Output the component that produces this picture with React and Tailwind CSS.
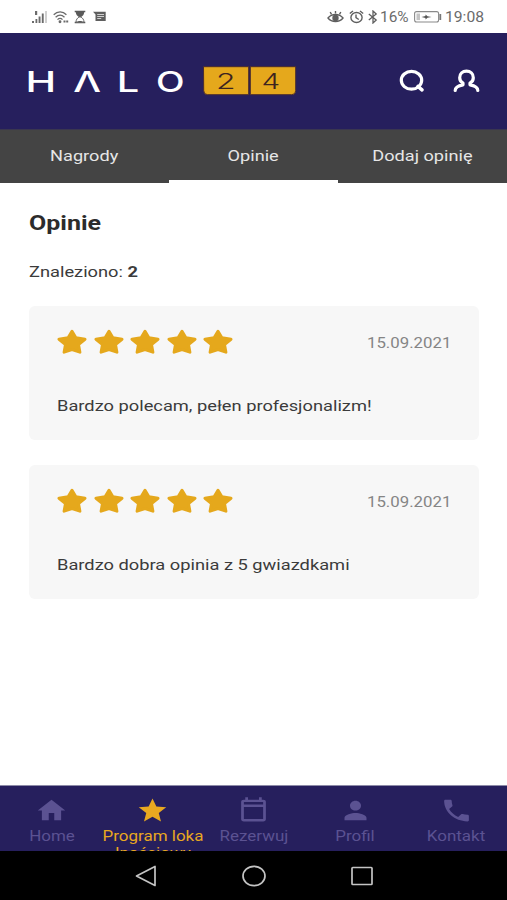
import React from "react";
import { MdHome, MdStar, MdPerson, MdPhone } from "react-icons/md";

const reviews = [
  { id: 1, date: "15.09.2021", text: "Bardzo polecam, pełen profesjonalizm!" },
  { id: 2, date: "15.09.2021", text: "Bardzo dobra opinia z 5 gwiazdkami" },
];

const tabs = ["Nagrody", "Opinie", "Dodaj opinię"];

const StatusBar = () => (
  <div className="flex h-[33px] shrink-0 items-center justify-between bg-white pl-8 pr-[23px] pt-px text-[#6b6b6b]">
    <div className="flex items-center gap-[5px]">
      {/* Zasięg */}
      <svg width="16" height="14" viewBox="0 0 16 14" fill="#6b6b6b">
        <path d="M0 11h2v2H0zM3.5 9h1.8v4H3.5zM6.6 6.5h1.9V13H6.6zM9.8 3.5h1.9V13H9.8z" />
        <path d="M3 1h2.2v4H3z" />
        <path d="M13.2 1h1.6v12h-1.6z" opacity=".4" />
      </svg>
      {/* Wi-Fi */}
      <svg width="16" height="14" viewBox="0 0 16 14" fill="none" stroke="#6b6b6b" strokeWidth="1.3">
        <path d="M.7 4.8C4.5.9 9.8.9 13.4 4.8" />
        <path d="M2.6 7.3c2.8-2.7 6.2-2.7 8.9 0M4.5 9.6c1.6-1.5 3.5-1.5 5 0" />
        <circle cx="7" cy="11.8" r=".8" fill="#6b6b6b" />
        <path d="M10.5 11.5h5" strokeWidth="2" strokeDasharray="2 .7" />
      </svg>
      {/* Klepsydra */}
      <svg width="12" height="14" viewBox="0 0 12 14">
        <path d="M.7 1.6h10.6M.7 12.6h10.6" stroke="#5a5a5a" strokeWidth="1.5" />
        <path d="M1.8 2h8.4c0 2.8-1.7 4-3.2 5H5C3.5 6 1.8 4.8 1.8 2z" fill="#5a5a5a" />
        <path d="M5 7h2c1.5 1 3 2.5 3 5.2H2C2 9.5 3.5 8 5 7z" fill="none" stroke="#6b6b6b" />
        <path d="M3.5 12c.5-1.300 4.500-1.300 5 0z" fill="#5a5a5a" />
      </svg>
      <svg width="14" height="12" viewBox="0 0 14 12" className="ml-0.5">
        <path d="M0 .8h12.700v9.200H2.500V3.500z" fill="#5f5f5f" />
        <path d="M4.200 3.500h6.800M4.200 5.500h6.800M4.200 7.500h4" stroke="#ddd" strokeWidth=".9" />
      </svg>
    </div>
    <div className="flex items-center">
      <svg width="17" height="14" viewBox="0 0 17 14" fill="none" stroke="#5f5f5f" strokeWidth="1.4">
        <path d="M1 8c3.700-4.700 11.300-4.700 15 0-3.700 4.700-11.300 4.700-15 0z" />
        <circle cx="8.500" cy="8" r="2.500" fill="#5f5f5f" />
        <path d="M8.500 1v2.500M3.200 2l1.300 2.300M13.800 2l-1.300 2.300" />
      </svg>
      <svg width="15" height="14" viewBox="0 0 15 14" fill="none" stroke="#5f5f5f" strokeWidth="1.4" className="ml-[5px]">
        <ellipse cx="7.500" cy="7.500" rx="5.600" ry="5" />
        <path d="M7 4.500v3.200l2.800 1.800M.8 3.500L4 1M14.200 3.500L11 1" />
      </svg>
      <svg width="10" height="14" viewBox="0 0 10 14" fill="none" stroke="#5f5f5f" strokeWidth="1.3" className="ml-1">
        <path d="M.8 4l7.400 6L5 13V1l3.200 3L.8 10" />
      </svg>
      <span className="ml-[2px] w-[31px] whitespace-nowrap text-sm">
        <span className="inline-block origin-left scale-x-110">16%</span>
      </span>
      <svg width="28" height="12" viewBox="0 0 28 12" className="ml-[3px]">
        <rect x=".6" y=".6" width="24" height="10.4" rx="2" fill="none" stroke="#8a8a8a" strokeWidth="1.1" />
        <path d="M2.500 2.500h3.500v6.600H2.500z" fill="#c4c4c4" />
        <path d="M7.500 6l4-1V3.500l2 1.700 4 .8-4 .8-2 1.700V7z" fill="#555" />
        <path d="M26.300 3v6" stroke="#777" strokeWidth="1.8" />
      </svg>
      <span className="ml-[3px] w-[39px] whitespace-nowrap text-sm">
        <span className="inline-block origin-left scale-x-[1.12]">19:08</span>
      </span>
    </div>
  </div>
);

const Logo = () => (
  <svg width="276" height="34" viewBox="-6 0 276 34" role="img" aria-label="HALO 24">
    <g fill="#fff" fontFamily="Inter, sans-serif" fontSize="28" fontWeight="500">
      <text transform="translate(-3.6 28) scale(1.47 1)">H</text>
      <text transform="translate(44.2 28) scale(1.4 1)">Λ</text>
      <text transform="translate(87.8 28) scale(1.42 1)">L</text>
      <text transform="translate(127 28) scale(1.33 1)">O</text>
    </g>
    <path d="M174.500 2.700h45.200v28h-41a4 4 0 0 1-4-4z" fill="#e5a81c" stroke="#4a2c2e" strokeWidth="1" />
    <path d="M221.300 2.700h45.400v24a4 4 0 0 1-4 4h-41.400z" fill="#e5a81c" stroke="#4a2c2e" strokeWidth="1" />
    <g fill="#3d2420" fontFamily="Inter, sans-serif" fontSize="22" fontWeight="300">
      <text transform="translate(187 25) scale(1.45 1)">2</text>
      <text transform="translate(232.500 25) scale(1.35 1)">4</text>
    </g>
  </svg>
);

const Header = () => (
  <header className="flex h-24 shrink-0 items-center justify-between bg-[#261f5d] pl-[23px] pr-[27px]">
    <Logo />
    <div className="flex items-center gap-[28px]">
      <svg width="26" height="24" viewBox="0 0 26 24" fill="none" stroke="#fff" strokeWidth="3.2" strokeLinecap="round">
        <ellipse cx="12.500" cy="11.300" rx="10.200" ry="8.900" />
        <path d="M19 17.500l4 3.400" strokeWidth="3.6" />
      </svg>
      <svg width="27" height="24" viewBox="0 0 27 24" fill="none" stroke="#fff" strokeWidth="3.2" strokeLinecap="round" strokeLinejoin="round">
        <path d="M2.200 21.500c0-3.200 2.200-4.700 7.800-5.700v-1.600C7.700 12.800 6.700 11 6.700 8.700c0-4 2.900-6.500 6.800-6.500s6.800 2.500 6.800 6.500c0 2.300-1 4.100-3.300 5.500v1.600c5.600 1 7.800 2.500 7.800 5.700" />
      </svg>
    </div>
  </header>
);

const Stars = () => (
  <div className="flex gap-[6.6px]">
    {[1, 2, 3, 4, 5].map((n) => (
      <svg key={n} width="30" height="26" viewBox="0 0 30 26" fill="#e5a81c" stroke="#e5a81c" strokeWidth="3" strokeLinejoin="round">
        <path d="M15 2.300l3.900 6.500 9.100 1.500-6.500 5.200 1.400 7.700L15 20.600l-7.900 2.600 1.400-7.700L2 10.300l9.100-1.500z" />
      </svg>
    ))}
  </div>
);

const Review = ({ date, text }) => (
  <div className="h-[134px] rounded-md bg-[#f7f7f7] px-7 pt-[22px]">
    <div className="flex h-[27px] items-center justify-between">
      <Stars />
      <span className="origin-right scale-x-[1.12] pt-[3px] text-[15px] text-[#858585]">{date}</span>
    </div>
    <p className="mt-[39px] w-fit origin-left scale-x-[1.218] whitespace-nowrap text-[15px] leading-6 text-[#3b3b3b]">
      {text}
    </p>
  </div>
);

const CalendarIcon = ({ className }) => (
  <svg className={className} viewBox="0 0 24 24" preserveAspectRatio="none" fill="currentColor">
    <path d="M19 3h-1V1h-2v2H8V1H6v2H5a2 2 0 0 0-2 2v14a2 2 0 0 0 2 2h14a2 2 0 0 0 2-2V5a2 2 0 0 0-2-2zm0 16H5V9h14zm0-12H5V5h14z" />
  </svg>
);

const navItems = [
  { label: "Home", Icon: MdHome },
  { label: "Program loka lnościowy", Icon: MdStar, active: true },
  { label: "Rezerwuj", Icon: CalendarIcon },
  { label: "Profil", Icon: MdPerson },
  { label: "Kontakt", Icon: MdPhone },
];

const BottomNav = () => (
  <nav className="grid h-[66px] shrink-0 grid-cols-5 overflow-hidden border-t border-[#8d8ba8] bg-[#261f5d] pl-px">
    {navItems.map(({ label, Icon, active }) => (
      <div
        key={label}
        className={`flex flex-col items-center pt-[10px] ${active ? "text-[#e9a820]" : "text-[#5b5292]"}`}
      >
        <Icon className="h-[29px] w-[33px] shrink-0" preserveAspectRatio="none" />
        <span className="mt-[3px] w-[88px] scale-x-[1.17] text-center text-[14.5px] leading-[17px]">{label}</span>
      </div>
    ))}
  </nav>
);

const SystemNav = () => (
  <div className="flex h-[49px] shrink-0 items-center justify-center gap-[85px] bg-black">
    <svg width="22" height="22" viewBox="0 0 22 22" fill="none" stroke="#c4c4c4" strokeWidth="1.7" strokeLinejoin="round">
      <path d="M20 1.500v19L1.500 11z" />
    </svg>
    <svg width="24" height="22" viewBox="0 0 24 22" fill="none" stroke="#c4c4c4" strokeWidth="1.7">
      <ellipse cx="12" cy="11" rx="11" ry="9.700" />
    </svg>
    <svg width="22" height="22" viewBox="0 0 22 22" fill="none" stroke="#c4c4c4" strokeWidth="1.7">
      <rect x="1" y="2.500" width="20" height="17" rx=".8" />
    </svg>
  </div>
);

const App = () => {
  return (
    <div className="flex h-[900px] w-[507px] flex-col overflow-hidden bg-white font-['Roboto',sans-serif]">
      <StatusBar />
      <Header />
      <div className="grid h-[54px] shrink-0 grid-cols-3 border-t border-[#3a3650] bg-[#444444] text-[15px] text-[#e6e6e6]">
        {tabs.map((tab) => (
          <div
            key={tab}
            className={`flex items-center justify-center border-b-3 pt-[3px] ${
              tab === "Opinie" ? "border-white" : "border-transparent"
            }`}
          >
            <span className="scale-x-[1.21]">{tab}</span>
          </div>
        ))}
      </div>
      <main className="flex-1 px-7 pl-[29px] text-[#2b2b2b]">
        <h1 className="mt-[26px] w-fit origin-left scale-x-[1.19] text-[21px] font-bold leading-7">Opinie</h1>
        <p className="mt-[23px] w-fit origin-left scale-x-[1.218] text-[15px] leading-6 text-[#3b3b3b]">
          Znaleziono: <b>2</b>
        </p>
        <div className="mt-[22px] flex flex-col gap-[25px]">
          {reviews.map((r) => (
            <Review key={r.id} date={r.date} text={r.text} />
          ))}
        </div>
      </main>
      <BottomNav />
      <SystemNav />
    </div>
  );
};

export default App;
